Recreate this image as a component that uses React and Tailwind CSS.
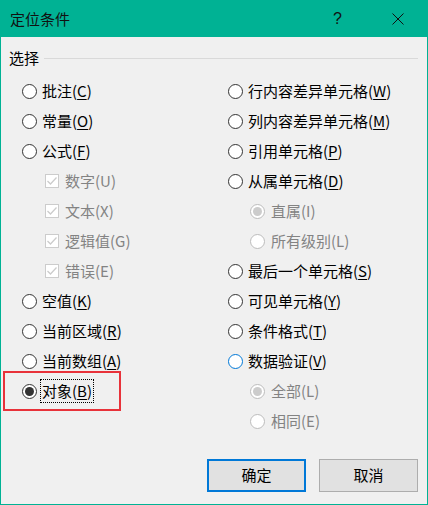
import React from 'react'

const FONT = { fontFamily: '"Noto Sans CJK SC", "Noto Sans", sans-serif' }

// label like 批注(C) with the access key underlined
const Label = ({ text, k, disabled }) => (
    <span className={`text-[15px] leading-[20px] whitespace-nowrap ${disabled ? 'text-[#838383]' : 'text-[#000]'}`}>
        {text}(<span className={disabled ? '' : 'underline underline-offset-2'}>{k}</span>)
    </span>
)

const Radio = ({ checked, disabled, focus }) => {
    const ring = disabled ? 'border-[#bcbcbc]' : focus ? 'border-[#0078d7]' : 'border-[#333333]'
    return (
        <span className={`w-[15px] h-[15px] rounded-full border ${ring} bg-white flex items-center justify-center shrink-0`}>
            {checked && <span className={`w-[9px] h-[9px] rounded-full ${disabled ? 'bg-[#cccccc]' : 'bg-[#333333]'}`} />}
        </span>
    )
}

const Check = () => (
    <span className="w-[14px] h-[14px] border border-[#cccccc] bg-white flex items-center justify-center shrink-0">
        <svg width="12" height="12" viewBox="0 0 12 12">
            <polyline points="1.5,6 4.5,9 10.5,2.5" fill="none" stroke="#cccccc" strokeWidth="1.3" />
        </svg>
    </span>
)

const Row = ({ children, indent, gap = 'gap-[5px]' }) => (
    <div className={`h-[30px] flex items-center ${gap} ${indent || ''}`}>{children}</div>
)

const leftItems = [
    { t: '批注', k: 'C' },
    { t: '常量', k: 'O' },
    { t: '公式', k: 'F' },
    { t: '数字', k: 'U', check: true },
    { t: '文本', k: 'X', check: true },
    { t: '逻辑值', k: 'G', check: true },
    { t: '错误', k: 'E', check: true },
    { t: '空值', k: 'K' },
    { t: '当前区域', k: 'R' },
    { t: '当前数组', k: 'A' },
]

const rightItems = [
    { t: '行内容差异单元格', k: 'W' },
    { t: '列内容差异单元格', k: 'M' },
    { t: '引用单元格', k: 'P' },
    { t: '从属单元格', k: 'D' },
    { t: '直属', k: 'I', sub: true, checked: true },
    { t: '所有级别', k: 'L', sub: true },
    { t: '最后一个单元格', k: 'S' },
    { t: '可见单元格', k: 'Y' },
    { t: '条件格式', k: 'T' },
    { t: '数据验证', k: 'V', focus: true },
    { t: '全部', k: 'L', sub: true, checked: true },
    { t: '相同', k: 'E', sub: true },
]

export default function App() {
    return (
        <div style={FONT} className="w-[428px] h-[505px] border border-[#00b294] bg-[#f0f0f0] flex flex-col">
            {/* title bar */}
            <div className="h-[36px] bg-[#00b294] flex items-center pl-[9px] shrink-0">
                <span className="text-[15px] text-[#111] leading-[20px]">定位条件</span>
                <span className="ml-auto text-[16px] text-[#111] leading-[20px] mr-[50px]" style={{ fontFamily: '"Liberation Sans", sans-serif' }}>?</span>
                <svg width="12" height="12" viewBox="0 0 12 12" className="mr-[23px]">
                    <path d="M0.5 0.5 L11.5 11.5 M11.5 0.5 L0.5 11.5" stroke="#111" strokeWidth="1" />
                </svg>
            </div>

            {/* group header */}
            <div className="mt-[11px] h-[20px] flex items-center pl-[8px] pr-[9px]">
                <span className="text-[15px] leading-[20px] text-[#000]">选择</span>
                <div className="flex-1 h-px bg-[#d9d9d9] ml-[5px]" />
            </div>

            <div className="mt-[8px] grid grid-cols-[206px_1fr] pl-[21px]">
                <div className="flex flex-col">
                    {leftItems.map((it, i) =>
                        it.check ? (
                            <Row key={i} indent="pl-[23px]" gap="gap-[6px]">
                                <Check />
                                <Label text={it.t} k={it.k} disabled />
                            </Row>
                        ) : (
                            <Row key={i}>
                                <Radio />
                                <Label text={it.t} k={it.k} />
                            </Row>
                        )
                    )}
                    <div className="relative">
                        <Row gap="gap-[3px]">
                            <Radio checked />
                            <span className="border border-dotted border-[#000] px-[1px] h-[24px] flex items-center">
                                <Label text="对象" k="B" />
                            </span>
                        </Row>
                        <div className="absolute left-[-19px] top-[-5px] w-[118px] h-[40px] border-2 border-[#e8323a]" />
                    </div>
                </div>
                <div className="flex flex-col">
                    {rightItems.map((it, i) => (
                        <Row key={i} indent={it.sub ? 'pl-[22px]' : ''} gap={it.sub ? 'gap-[6px]' : 'gap-[5px]'}>
                            <Radio checked={it.checked} disabled={it.sub} focus={it.focus} />
                            <Label text={it.t} k={it.k} disabled={it.sub} />
                        </Row>
                    ))}
                </div>
            </div>

            {/* buttons */}
            <div className="mt-auto flex justify-end gap-[13px] pr-[9px] pb-[12px]">
                <button className="w-[99px] h-[33px] border-2 border-[#0078d7] bg-[#e1e1e1] text-[15px] text-[#000]">确定</button>
                <button className="w-[99px] h-[33px] border border-[#adadad] bg-[#e1e1e1] text-[15px] text-[#000]">取消</button>
            </div>
        </div>
    )
}
